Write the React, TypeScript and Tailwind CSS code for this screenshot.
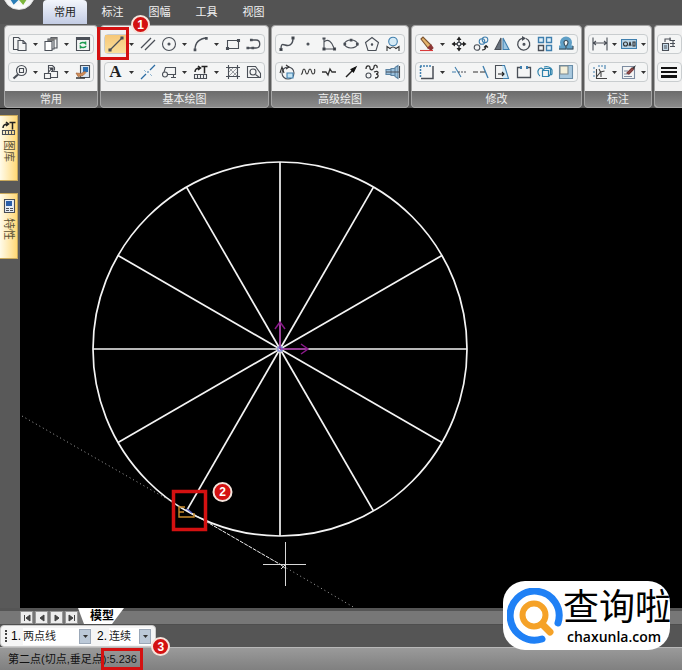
import type { ReactNode } from 'react'

const INK = '#4a4f57'
const BLUE = '#3f7fae'

/* ---------- shared bits ---------- */

function Icon({ children }: { children: ReactNode }) {
  return (
    <svg
      viewBox="0 0 16 16"
      className="h-4 w-4 shrink-0"
      fill="none"
      stroke={INK}
      strokeWidth="1.1"
      aria-hidden="true"
    >
      {children}
    </svg>
  )
}

function Tool({ label, children }: { label: string; children: ReactNode }) {
  return (
    <button
      type="button"
      aria-label={label}
      className="flex h-full w-[21px] shrink-0 items-center justify-center"
    >
      {children}
    </button>
  )
}

function More({ label }: { label: string }) {
  return (
    <button
      type="button"
      aria-label={label}
      className="flex h-full min-w-0 w-[11px] items-center justify-center"
    >
      <svg viewBox="0 0 5 3" className="h-[3px] w-[5px]" aria-hidden="true">
        <path d="M0 0h5L2.5 3z" fill="#333" />
      </svg>
    </button>
  )
}

function Row({ children }: { children: ReactNode }) {
  return (
    <div className="flex h-5 items-center justify-between rounded-sm border border-[#c9cdcf] bg-[#f4f5f5]">
      {children}
    </div>
  )
}

function Panel({
  title,
  width,
  children,
}: {
  title: string
  width: string
  children: ReactNode
}) {
  return (
    <section
      className={`flex shrink-0 flex-col rounded-sm border border-[#a5a5a5] bg-[#f1f1f1] ${width}`}
    >
      <div className="flex h-[65px] flex-col gap-2 px-[3px] pt-2">{children}</div>
      <h2 className="h-4 rounded-b-xs bg-linear-to-b from-[#6c6c6c] to-[#8a8a8a] text-center text-[11px] leading-4 text-[#f0f0f0]">
        {title}
      </h2>
    </section>
  )
}

function Badge({ n }: { n: number }) {
  return (
    <span className="flex h-[19px] w-[19px] items-center justify-center rounded-full border-2 border-[#f6e4dc] bg-[#d41111] text-[12px] leading-none font-bold text-white">
      {n}
    </span>
  )
}

/* ---------- ribbon ---------- */

const tabs = ['常用', '标注', '图幅', '工具', '视图']

function TabBar() {
  return (
    <header className="relative flex h-6 pl-[43px]">
      <div className="absolute -top-[22px] left-[3px] h-8 w-8 overflow-hidden rounded-full border border-[#ddd] bg-linear-to-b from-[#cfd2d4] to-white">
        <svg viewBox="0 0 30 30" className="h-full w-full" fill="none" aria-hidden="true">
          <path d="M5 15l5 8 5-5" stroke="#2c7fb8" strokeWidth="3.5" />
          <path d="M14 17l5 6 6-9" stroke="#7db63c" strokeWidth="3.5" />
        </svg>
      </div>
      <nav className="flex items-end" aria-label="功能区">
        {tabs.map((tab, i) => (
          <a
            key={tab}
            href="#"
            aria-current={i === 0 ? 'page' : undefined}
            className={
              i === 0
                ? 'mr-[2px] h-6 w-11 rounded-t-sm bg-linear-to-b from-[#f3f6fc] to-[#c3cce4] text-center text-[11px] leading-6 text-[#222]'
                : 'h-6 w-[47px] text-center text-[11px] leading-6 text-[#f2f2f2]'
            }
          >
            {tab}
          </a>
        ))}
      </nav>
    </header>
  )
}

function CommonPanel() {
  return (
    <Panel title="常用" width="w-[94px]">
      <Row>
        <Tool label="复制">
          <Icon>
            <path d="M6 13.500H1.500V1.500h5l2 2M6 4.500h5l3 3v7H6z" />
            <path d="M11 4.500v3h3" />
          </Icon>
        </Tool>
        <More label="复制选项" />
        <Tool label="粘贴">
          <Icon>
            <path d="M2 14.500v-9h7v9z" fill="#fff" />
            <path d="M5 5V3h6v10H9M8 3V1.500h6V12h-3" />
            <path d="M5 4h6M8.500 2.500H14" stroke="#777" strokeWidth="2" />
          </Icon>
        </Tool>
        <More label="粘贴选项" />
        <Tool label="刷新">
          <Icon>
            <path d="M1.500 1.500h13v13h-13z" />
            <path d="M1.500 3h13" strokeWidth="2" />
            <path d="M5 8c1-2 4-2 5.500-.5V5.500M11 10c-1 2-4 2-5.500.5v2" stroke="#1c9b50" strokeWidth="1.600" />
          </Icon>
        </Tool>
      </Row>
      <Row>
        <Tool label="缩放">
          <Icon>
            <circle cx="9.500" cy="6.500" r="5" />
            <path d="M7.500 4.500h4v4h-4z" />
            <path d="M6 10.500L1.500 14.500" strokeWidth="2.200" />
          </Icon>
        </Tool>
        <More label="缩放选项" />
        <Tool label="图块">
          <Icon>
            <path d="M1.500 9.500h6v5h-6zM8 7.500h6.500v6H8M5.500 8V1.500h4l2 2v3M9 4L5 9" />
            <path d="M7 4h3v3z" fill="#222" />
          </Icon>
        </Tool>
        <More label="图块选项" />
        <Tool label="拾取特性">
          <Icon>
            <path d="M5.500 1.500h9v12h-9z" fill="#d8e5f2" />
            <path d="M8 3h5v5H8z" fill="#2a6fb2" stroke="none" />
            <path d="M1 9l5 .5 4-2 1 1-3 3-5 1z" fill="#ce8d58" stroke="#a86438" strokeWidth=".7" />
            <path d="M1 14h9" stroke="#333" strokeWidth="1.500" />
          </Icon>
        </Tool>
      </Row>
    </Panel>
  )
}

function BasicPanel() {
  return (
    <Panel title="基本绘图" width="w-[169px]">
      <Row>
        <div className="relative h-full shrink-0">
          <button
            type="button"
            aria-label="直线"
            className="flex h-full w-[21px] items-center justify-center bg-linear-to-b from-[#f6c777] to-[#fadf9b]"
          >
            <Icon>
              <path d="M2 14L14 2" strokeWidth="1.300" />
              <path d="M1 13h2v2H1zM13 1h2v2h-2z" fill={INK} />
            </Icon>
          </button>
          <div className="pointer-events-none absolute -top-2 -left-[8px] h-[33px] w-8 border-3 border-[#d41111]" />
          <div className="absolute -top-[20px] left-[26px]">
            <Badge n={1} />
          </div>
        </div>
        <More label="直线选项" />
        <Tool label="平行线">
          <Icon>
            <path d="M1 12L11 2M5 14L15 4" strokeWidth="1.300" />
          </Icon>
        </Tool>
        <Tool label="圆">
          <Icon>
            <circle cx="8" cy="8" r="6.500" />
            <circle cx="8" cy="8" r="1" fill={INK} />
          </Icon>
        </Tool>
        <More label="圆选项" />
        <Tool label="圆弧">
          <Icon>
            <path d="M2 14C2 7 6 2.500 14 2" strokeWidth="1.300" />
            <path d="M1.200 13h1.600v1.600H1.200zM12.500 1.500h1.600v1.600h-1.600z" fill={INK} />
          </Icon>
        </Tool>
        <More label="圆弧选项" />
        <Tool label="矩形">
          <Icon>
            <path d="M2.500 4.500h11v8h-11z" />
            <path d="M1.500 11.500h2v2h-2zM12.500 3.500h2v2h-2z" fill={INK} />
          </Icon>
        </Tool>
        <Tool label="多段线">
          <Icon>
            <path d="M5 4h5c5 0 5 8 0 8H2" strokeWidth="1.300" />
            <path d="M4.500 3.200h1.600v1.600H4.500zM1 11.200h1.600v1.600H1zM6 11.200h1.600v1.600H6z" fill={INK} />
          </Icon>
        </Tool>
      </Row>
      <Row>
        <button
          type="button"
          aria-label="文字"
          className="w-[21px] shrink-0 text-center font-['Liberation_Serif',serif] text-[17px] leading-[18px] font-bold text-[#222]"
        >
          A
        </button>
        <More label="文字选项" />
        <Tool label="中心线">
          <Icon>
            <path d="M1 15l5-5M7.500 8.500l1-1M10 6l5-5" stroke="#2b6ca3" strokeWidth="1.300" />
            <path d="M4 6l2 2M10 10l2 2" stroke="#7aa7c8" strokeWidth=".8" />
          </Icon>
        </Tool>
        <Tool label="孔轴">
          <Icon>
            <circle cx="4" cy="10.500" r="2.500" />
            <path d="M3 8l1.500-4.500h10v7h-8M10 13.500h5M12.500 10.500v3" />
          </Icon>
        </Tool>
        <More label="孔轴选项" />
        <Tool label="图库">
          <Icon>
            <path d="M1.500 10.500h12v4h-12zM4.500 10.500v4M7.500 10.500v4M10.500 10.500v4" />
            <path d="M2 8c0-3 2-4 5-4M5 2l2.500 2L5 6M8.500 2.500h6M11.500 2.500v7" stroke="#222" strokeWidth="1.500" />
          </Icon>
        </Tool>
        <More label="图库选项" />
        <Tool label="剖面线">
          <Icon>
            <path d="M3.500 1v14M12.500 1v14M1 3.500h14M1 12.500h14" />
            <path d="M4 8l4-4M4 12l8-8M8 12l4-4M4 4l8 8" strokeWidth=".5" />
          </Icon>
        </Tool>
        <Tool label="填充">
          <Icon>
            <path d="M1.500 2.500h8l5 7v4h-13z" />
            <circle cx="7" cy="8" r="3" />
            <path d="M9.500 10.500l4 3" />
          </Icon>
        </Tool>
      </Row>
    </Panel>
  )
}

function AdvancedPanel() {
  return (
    <Panel title="高级绘图" width="w-[138px]">
      <Row>
        <Tool label="样条">
          <Icon>
            <path d="M2 13c0-5 1-5 4-4s8 1 8-7" strokeWidth="1.400" />
            <path d="M1 12.500h2v2H1zM13 1h2v2h-2z" fill="#222" />
          </Icon>
        </Tool>
        <Tool label="点">
          <Icon>
            <circle cx="8" cy="8" r="1" fill={INK} />
          </Icon>
        </Tool>
        <Tool label="公式曲线">
          <Icon>
            <path d="M3 2v11h11M3 6c4-4 8 0 10 6" />
            <path d="M2 12h2v2H2zM12.500 12h2v2h-2zM2 2h2v1H2z" fill="#222" />
          </Icon>
        </Tool>
        <Tool label="椭圆">
          <Icon>
            <ellipse cx="8" cy="8" rx="6.500" ry="4" />
            <path d="M1 7.300h1.600v1.600H1zM13.500 7.300h1.600v1.600h-1.600zM7.300 3.300h1.600v1.600H7.300z" fill="#222" />
          </Icon>
        </Tool>
        <Tool label="正多边形">
          <Icon>
            <path d="M8 1.500l6.500 5-2.500 8H4l-2.500-8z" />
            <circle cx="8" cy="8.500" r=".7" fill={INK} />
          </Icon>
        </Tool>
        <Tool label="圆弧拟合">
          <Icon>
            <circle cx="8" cy="5.500" r="4.300" fill="#d5eaf5" stroke={BLUE} />
            <path d="M2 15v-4.500l3 2c2-2 4-2 6 0l3-2V15" stroke="#333" />
          </Icon>
        </Tool>
      </Row>
      <Row>
        <Tool label="局部放大">
          <Icon>
            <circle cx="9" cy="9" r="6" />
            <path d="M8 9h6v5H8z" fill="#c4e4f4" stroke={BLUE} />
            <path d="M1 9l2-6 2 6M7 1l3 2-3 2" stroke="#333" />
          </Icon>
        </Tool>
        <Tool label="波浪线">
          <Icon>
            <path d="M1 10c2 1 1-5 3-5s1 5 3 5 1-5 3-5 1 5 3 5 2-3 1.500-5" stroke="#333" />
          </Icon>
        </Tool>
        <Tool label="双折线">
          <Icon>
            <path d="M1 8h4l2 3 2-6 2 3h4" stroke="#333" strokeWidth="1.300" />
          </Icon>
        </Tool>
        <Tool label="箭头">
          <Icon>
            <path d="M3 13l7-7" stroke="#222" strokeWidth="1.400" />
            <path d="M13 3L8 5.500 10.500 8z" fill="#111" stroke="#111" />
          </Icon>
        </Tool>
        <Tool label="轮廓">
          <Icon>
            <circle cx="4.500" cy="11.500" r="2.500" />
            <path d="M2 5c0-4 4-4 4-1s4 2 4-1 4-2 3 1M10 8c5-2 5 2 2 2 3 0 3 4-1 4" stroke="#333" strokeWidth="1.300" />
          </Icon>
        </Tool>
        <Tool label="齿轮轴">
          <Icon>
            <path d="M1 5.500h5v5H1zM6 4.500h4v7H6zM10 3.500l3-2v13l-3-2z" fill="#9cc1dc" stroke="#5b83a3" />
            <path d="M1 8h13M14.500 2v12" />
          </Icon>
        </Tool>
      </Row>
    </Panel>
  )
}

function ModifyPanel() {
  return (
    <Panel title="修改" width="w-[171px]">
      <Row>
        <Tool label="删除">
          <Icon>
            <path d="M2 3l2-2 8 8-3 3z" fill="#e4b36b" stroke="#7c5431" />
            <path d="M9 12l3-3 2 3-2 2z" fill="#8c3535" stroke="#8c3535" />
            <path d="M1 14.500h13" stroke="#d83a3a" />
          </Icon>
        </Tool>
        <More label="删除选项" />
        <Tool label="平移">
          <Icon>
            <path d="M8 3v3M8 10v3M3 8h3M10 8h3" stroke="#222" strokeWidth="1.300" />
            <path d="M8 .5L10.500 4h-5zM8 15.500L10.500 12h-5zM.5 8L4 5.500v5zM15.500 8L12 5.500v5z" fill="#222" stroke="none" />
            <path d="M6.500 6.500h3v3h-3z" />
          </Icon>
        </Tool>
        <Tool label="平移复制">
          <Icon>
            <circle cx="4" cy="11.500" r="2.800" />
            <circle cx="9" cy="5.500" r="2.800" stroke={BLUE} />
            <circle cx="12" cy="3.800" r="2.800" stroke={BLUE} />
            <path d="M9 14c3 0 4-1 4-4M11 11.500l2-2 2 2" stroke="#222" />
          </Icon>
        </Tool>
        <Tool label="镜像">
          <Icon>
            <path d="M7 2v11.500H1z" fill="#68727d" />
            <path d="M9 2v11.500h6z" fill="#9dc6e2" stroke={BLUE} />
          </Icon>
        </Tool>
        <Tool label="旋转">
          <Icon>
            <path d="M10 2.500A6 6 0 1 1 6 2.300" strokeWidth="1.300" />
            <path d="M6 0l4 2.300L6 5z" fill={INK} stroke="none" />
            <circle cx="8" cy="8.300" r="1" fill={INK} />
          </Icon>
        </Tool>
        <Tool label="阵列">
          <Icon>
            <path d="M1.500 1.500h5v5h-5zM9.500 1.500h5v5h-5zM9.500 9.500h5v5h-5z" fill="#e0f0fa" stroke={BLUE} strokeWidth="1.400" />
            <path d="M1.500 9.500h5v5h-5z" strokeWidth="1.400" />
          </Icon>
        </Tool>
        <Tool label="等距线">
          <Icon>
            <path
              d="M1 11.500h5c0-2-2-2-2-5a4 4 0 0 1 8 0c0 3-2 3-2 5h5"
              stroke="#5f9fc6"
              strokeWidth="4"
            />
            <path
              d="M1 13h7V10.500C6.500 9.500 6 8 6 6.500a2 2 0 0 1 4 0C10 8 9 9 8.500 10M9 13h6v-3"
              stroke="#3a4a57"
            />
          </Icon>
        </Tool>
      </Row>
      <Row>
        <Tool label="裁剪框">
          <Icon>
            <path d="M2 14.500h12V2" strokeWidth="1.500" />
            <path d="M1.500 13V2M1 2h12" stroke={BLUE} strokeWidth="1.500" strokeDasharray="2 1" />
          </Icon>
        </Tool>
        <More label="裁剪选项" />
        <Tool label="裁剪">
          <Icon>
            <path d="M1 8h4M4 3l6 10" stroke={BLUE} />
            <path d="M7 8h8" strokeDasharray="2 1" />
          </Icon>
        </Tool>
        <Tool label="延伸">
          <Icon>
            <path d="M10 2l5 12" stroke={BLUE} strokeWidth="1.300" />
            <path d="M0 8h5M7 8h5" stroke="#333" />
          </Icon>
        </Tool>
        <Tool label="拉伸">
          <Icon>
            <path d="M9 1.500H1.500v13H9" />
            <path d="M8 1.500h2.500l4 13H9" stroke={BLUE} fill="#d5eaf5" />
            <path d="M4 10h6M8 8l2 2-2 2" stroke="#222" />
          </Icon>
        </Tool>
        <Tool label="打断">
          <Icon>
            <path d="M5 3.500H1.500v10h13v-10H11" strokeWidth="1.300" />
            <path d="M5 2v3M11 2v3" stroke={BLUE} strokeWidth="2" />
          </Icon>
        </Tool>
        <Tool label="分解">
          <Icon>
            <path d="M5.500 6.500h6v6h-6zM3 12C0 10 0 5 4 4l2 1M14 11l1-1V6c-1-3-5-4-8-3M5.500 6.500l2-2h6v6l-2 2" stroke="#2f83ad" strokeWidth="1.200" />
          </Icon>
        </Tool>
        <Tool label="缩放">
          <Icon>
            <path d="M1.500 1.500h13v13h-13z" fill="#a9c9df" stroke="#688da9" />
            <path d="M2 2h8v8H2z" fill="#f4efd9" stroke="#7d8a90" />
          </Icon>
        </Tool>
      </Row>
    </Panel>
  )
}

function DimensionPanel() {
  return (
    <Panel title="标注" width="w-[68px]">
      <Row>
        <Tool label="尺寸标注">
          <Icon>
            <path d="M1 1.500v13M15 1.500v13M1 7h14M4 5L1.500 7 4 9M12 5l2.500 2L12 9" />
          </Icon>
        </Tool>
        <More label="尺寸选项" />
        <Tool label="形位公差">
          <Icon>
            <path d="M.5 3.500h15v9H.5z" fill="#b7d3e6" stroke={BLUE} />
            <circle cx="4.500" cy="8" r="2" stroke="#333" />
            <path d="M8 10l1-4 1 4M12 6h2v4h-2z" stroke="#333" />
          </Icon>
        </Tool>
        <More label="公差选项" />
      </Row>
      <Row>
        <Tool label="坐标标注">
          <Icon>
            <path d="M4.500 5v9.500H15M4.500 13l4-5 4-1M7 5l2 4v4" stroke="#444" />
            <path d="M1 4h2M1 8h2M1 12h2M6 2h2M9 2h2M13 1v4" stroke={BLUE} />
          </Icon>
        </Tool>
        <More label="坐标选项" />
        <Tool label="编辑标注">
          <Icon>
            <path d="M1.500 2.500h12v12h-12zM3 7h4M3 10h5M3 12.500h8" stroke="#7c8ba0" />
            <path d="M6 9l5-5 2 1-5 5z" fill="#9a5454" stroke="#7b3a3a" />
            <path d="M11 4l4-3-2 4z" fill="#333" stroke="none" />
          </Icon>
        </Tool>
        <More label="编辑选项" />
      </Row>
    </Panel>
  )
}

function PropertyPanel() {
  return (
    <section className="flex min-w-0 flex-1 flex-col overflow-hidden rounded-l-sm border border-r-0 border-[#a5a5a5] bg-[#f1f1f1]">
      <div className="flex h-[65px] flex-col gap-2 pt-2 pl-[2px]">
        <Row>
          <Tool label="图层">
            <Icon>
              <path d="M1.500 7.500h6v7h-6z" fill="#c6dcea" />
              <path d="M3 10h3M3 12h3M4 6V3h6M9 1.500v3h5M9 7.500h5M9 10.500h5M12 4v6" />
            </Icon>
          </Tool>
        </Row>
        <Row>
          <Tool label="线宽">
            <Icon>
              <path d="M0 4h16M0 8h16" stroke="#111" strokeWidth="2" />
              <path d="M0 12.500h16" stroke="#111" strokeWidth="3" />
            </Icon>
          </Tool>
        </Row>
      </div>
      <div className="h-4 bg-linear-to-b from-[#6c6c6c] to-[#8a8a8a]" />
    </section>
  )
}

/* ---------- work area ---------- */

function SideTab({ title, children }: { title: string; children: ReactNode }) {
  return (
    <button
      type="button"
      className="flex h-[66px] w-[18px] flex-col items-center gap-1 border border-l-0 border-[#c9a95c] bg-linear-to-r from-[#fffbe9] to-[#ffd873] pt-1"
    >
      {children}
      <span className="[writing-mode:vertical-rl] [text-orientation:sideways] text-[11px] leading-none text-[#5b5136]">
        {title}
      </span>
    </button>
  )
}

// spokes every 30 degrees around the circle centre
const CX = 260
const CY = 240
const R = 187
const spokes = Array.from({ length: 12 }, (_, i) => {
  const a = (i * Math.PI) / 6
  return { x: CX + R * Math.cos(a), y: CY + R * Math.sin(a) }
})

function Drawing() {
  return (
    <svg
      viewBox="0 0 662 499"
      preserveAspectRatio="xMinYMin meet"
      className="min-w-0 flex-1 bg-black"
      fill="none"
      role="img"
      aria-label="绘图区"
    >
      <g stroke="#f4f4f4" strokeWidth="1.700">
        <circle cx={CX} cy={CY} r={R} />
        {spokes.map((p, i) => (
          <line key={i} x1={CX} y1={CY} x2={p.x} y2={p.y} />
        ))}
      </g>
      <g stroke="#8b1a8b" strokeWidth="1.500">
        <path d="M260 240v-27M255 220l5-7 5 7" />
        <path d="M260 240h28M281 235l7 5-7 5" />
      </g>
      <path d="M258 238h4v4h-4z" stroke="#5a63c8" />
      {/* tangent preview */}
      <path d="M2 307L168 402M263 457L335 499" stroke="#a5a5a5" strokeDasharray="1 3" />
      <path d="M168 402L263 457" stroke="#eee" strokeDasharray="4 1" />
      <path d="M243 455.500h43M265.500 433v44" stroke="#d8d8d8" />
      <path d="M260 455l6 5M261 460l4-4" stroke="#ddd" />
      {/* snap marker */}
      <path d="M165 398h-6v10h15v-4M159 403h5" stroke="#c98b2b" strokeWidth="1.400" />
      <path d="M167 400l5 4" stroke="#5a63c8" strokeWidth="1.500" />
      <rect x="153.500" y="382.500" width="32" height="38" stroke="#d41111" strokeWidth="3.500" />
      <circle cx="202.500" cy="383" r="9" fill="#d41111" stroke="#f6e4dc" strokeWidth="2" />
      <text x="202.500" y="387" textAnchor="middle" fill="#fff" className="text-[12px] font-bold">
        2
      </text>
    </svg>
  )
}

/* ---------- bottom bars ---------- */

const pageNav = [
  { label: '第一页', d: 'M2.500 2v6M8 2L4 5l4 3z' },
  { label: '上一页', d: 'M7 2L3 5l4 3z' },
  { label: '下一页', d: 'M3 2l4 3-4 3z' },
  { label: '最后一页', d: 'M2 2l4 3-4 3zM7.500 2v6' },
]

function ModelBar() {
  return (
    <div className="flex h-[17px] items-end border-t-3 border-b border-t-[#555] border-b-[#4e4e4e] bg-[#777] pl-5">
      <div className="flex gap-[2px]">
        {pageNav.map((b) => (
          <button
            key={b.label}
            type="button"
            aria-label={b.label}
            className="flex h-[13px] w-[13px] items-center justify-center border border-[#999] bg-[#ededed]"
          >
            <svg viewBox="0 0 10 10" className="h-[10px] w-[10px]" aria-hidden="true">
              <path d={b.d} fill="#444" stroke="#444" />
            </svg>
          </button>
        ))}
      </div>
      <button
        type="button"
        className="h-4 w-[46px] bg-white pl-3 text-left text-[12px] leading-4 font-bold text-black [clip-path:polygon(0_0,100%_0,74%_100%,6px_100%)]"
      >
        模型
      </button>
    </div>
  )
}

function Choice({
  n,
  id,
  value,
  width,
}: {
  n: string
  id: string
  value: string
  width: string
}) {
  return (
    <div className="flex items-center gap-[2px]">
      <label htmlFor={id} className="text-[12px] leading-4">
        {n}
      </label>
      <div className={`relative flex items-center ${width}`}>
        <select
          id={id}
          defaultValue={value}
          className="h-[17px] w-full appearance-none bg-white text-[11px] leading-4 text-[#222]"
        >
          <option>{value}</option>
        </select>
        <span className="pointer-events-none absolute top-px right-0 flex h-[15px] w-3 items-center justify-center border border-[#9ba8b8] bg-[#bcc9d8]">
          <svg viewBox="0 0 5 3" className="h-[3px] w-[5px]" aria-hidden="true">
            <path d="M0 0h5L2.500 3z" fill="#333" />
          </svg>
        </span>
      </div>
    </div>
  )
}

function Watermark() {
  return (
    <div className="absolute right-3 bottom-5 flex h-[69px] w-[167px] items-center overflow-hidden rounded-[22px] bg-white pl-1">
      <svg viewBox="0 0 56 56" className="h-14 w-14 shrink-0" fill="none" aria-hidden="true">
        <path d="M35 51A24.500 24.500 0 1 1 51 35" stroke="#1f80f5" strokeWidth="7" strokeLinecap="round" />
        <circle cx="27" cy="27" r="11.500" stroke="#f5a228" strokeWidth="6" />
        <path d="M35 36l8 8" stroke="#f5a228" strokeWidth="7" strokeLinecap="round" />
      </svg>
      <div className="flex flex-col text-black">
        <span className="text-[36px] leading-[42px] whitespace-nowrap">查询啦</span>
        <span className="pl-1 font-['Open_Sans',sans-serif] text-[14px] leading-4 font-semibold">
          chaxunla.com
        </span>
      </div>
    </div>
  )
}

export default function App() {
  return (
    <div className="relative flex min-h-screen flex-col overflow-hidden bg-[#535353] font-['Liberation_Sans','Noto_Sans_CJK_SC',sans-serif]">
      <TabBar />
      <div className="flex gap-[2px] border-b border-black bg-[#5a5a5a] pt-px pl-1">
        <CommonPanel />
        <BasicPanel />
        <AdvancedPanel />
        <ModifyPanel />
        <DimensionPanel />
        <PropertyPanel />
      </div>

      <main className="flex flex-1">
        <aside className="flex w-5 shrink-0 flex-col gap-3 bg-[#595959] pt-[6px]">
          <SideTab title="图库">
            <Icon>
              <path d="M1.500 10.500h12v4h-12zM4.500 10.500v4M7.500 10.500v4M10.500 10.500v4" />
              <path d="M2 8c0-3 2-4 5-4M5 2l2.500 2L5 6M8.500 2.500h6M11.500 2.500v7" stroke="#222" strokeWidth="1.500" />
            </Icon>
          </SideTab>
          <SideTab title="特性">
            <Icon>
              <path d="M3.500 1.500h10v13h-10z" fill="#e5edf6" />
              <path d="M5 3h6v5H5z" fill="#2a5fa8" stroke="none" />
              <path d="M5 10.500h3M9 10.500h3M5 12.500h3M9 12.500h3" />
            </Icon>
          </SideTab>
        </aside>
        <Drawing />
      </main>

      <footer>
        <ModelBar />
        <div className="flex h-[22px] bg-[#555]">
          <div className="flex items-center gap-[6px] rounded-sm border border-[#ccc] bg-[#f5f5f5] pr-1 pl-1">
            <div className="flex items-center gap-1">
              <span className="h-3 border-l-2 border-dotted border-[#444]" />
              <Choice n="1." id="line-type" value="两点线" width="w-[68px]" />
            </div>
            <Choice n="2." id="line-mode" value="连续" width="w-[42px]" />
          </div>
        </div>
        <div className="flex h-[23px] items-center border-t border-[#b8b8b8] bg-linear-to-b from-[#9a9a9a] to-[#808080] pl-2 text-[11px] text-[#111]">
          <label htmlFor="distance" className="whitespace-nowrap">
            第二点(切点,垂足点):
          </label>
          <div className="relative">
            <input
              id="distance"
              defaultValue="5.236"
              className="block w-9 bg-transparent text-[11px] leading-4 outline-none"
            />
            <div className="pointer-events-none absolute -top-[3px] -left-2 h-[22px] w-[42px] border-3 border-[#d41111]" />
            <div className="absolute -top-[14px] left-[42px]">
              <Badge n={3} />
            </div>
          </div>
        </div>
      </footer>

      <Watermark />
    </div>
  )
}
